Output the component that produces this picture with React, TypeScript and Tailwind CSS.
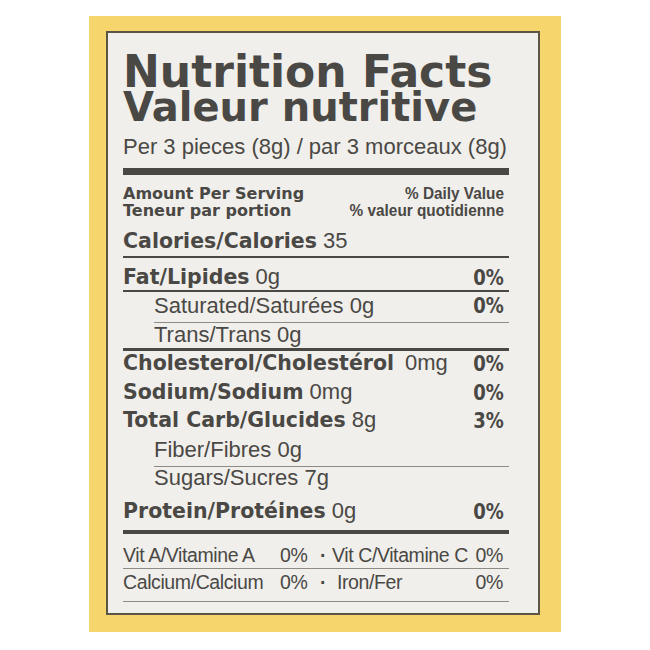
import React from "react";

const BOLD = "font-['DejaVu_Sans',sans-serif] font-bold text-[20.5px]";
const REG = "font-['Liberation_Sans',Arial,sans-serif] font-normal text-[22px]";
const PCT = "inline-block origin-right scale-x-[0.88] font-['DejaVu_Sans',sans-serif] font-bold text-[20.5px]";

function Pct({ v }: { v: string }) {
  return <span className={PCT}>{v}</span>;
}

export default function App() {
  return (
    <div className="w-[650px] h-[650px] bg-white pt-[16px] text-[#4a4844]">
      <div className="mx-auto w-[472px] h-[616px] bg-[#f6d66c] pl-[17px] pt-[15px] pr-[21px] pb-[17px]">
        <div className="h-full border-2 border-[#5c5543] bg-[#f0efec] pl-[15px] pr-[29px] pt-[21px]">
          <div className="font-['DejaVu_Sans',sans-serif] font-bold text-[44px] leading-[36px] h-[36px] whitespace-nowrap">
            Nutrition Facts
          </div>
          <div className="font-['DejaVu_Sans',sans-serif] font-bold text-[40px] leading-[35px] h-[35px] whitespace-nowrap">
            Valeur nutritive
          </div>
          <div className="mt-[10px] font-['Liberation_Sans',Arial,sans-serif] text-[22px] leading-[24px] h-[24px] whitespace-nowrap">
            Per 3 pieces (8g) / par 3 morceaux (8g)
          </div>
          <div className="mt-[9px] h-[7px] bg-[#4a4844]" />
          <div className="mt-[10px] flex justify-between pr-[5px]">
            <div className="font-['DejaVu_Sans',sans-serif] font-bold text-[16px] leading-[17px]">
              <div>Amount Per Serving</div>
              <div>Teneur par portion</div>
            </div>
            <div className="font-['Liberation_Sans',Arial,sans-serif] font-bold text-[16.5px] leading-[17px] text-right origin-right scale-x-[0.93]">
              <div>% Daily Value</div>
              <div>% valeur quotidienne</div>
            </div>
          </div>

          {/* Calories */}
          <div className="h-[39px] pb-[3px] flex items-end border-b-2 border-[#4a4844] leading-[24px] whitespace-nowrap">
            <span className={BOLD}>Calories/Calories</span>
            <span className={REG}>&nbsp;35</span>
          </div>
          {/* Fat */}
          <div className="h-[34px] pb-[0px] pr-[5px] flex items-end justify-between border-b-2 border-[#4a4844] leading-[24px] whitespace-nowrap">
            <span>
              <span className={BOLD}>Fat/Lipides</span>
              <span className={REG}> 0g</span>
            </span>
            <Pct v="0%" />
          </div>
          {/* Saturated */}
          <div className="h-[31px] pl-[31px] flex">
            <div className="flex-1 pb-[4px] pr-[5px] flex items-end justify-between border-b border-[#8e8b85] leading-[24px] whitespace-nowrap">
              <span className={REG}>Saturated/Saturées 0g</span>
              <Pct v="0%" />
            </div>
          </div>
          {/* Trans */}
          <div className="h-[28px] pb-[1px] pl-[31px] flex items-end border-b-[3px] border-[#4a4844] leading-[24px] whitespace-nowrap">
            <span className={REG}>Trans/Trans 0g</span>
          </div>
          {/* Cholesterol */}
          <div className="h-[29px] pb-[4px] pr-[5px] flex items-end justify-between leading-[24px] whitespace-nowrap">
            <span>
              <span className={BOLD}>Cholesterol/Cholestérol</span>
              <span className={`${REG} ml-[11px]`}>0mg</span>
            </span>
            <Pct v="0%" />
          </div>
          {/* Sodium */}
          <div className="h-[29px] pb-[4px] pr-[5px] flex items-end justify-between leading-[24px] whitespace-nowrap">
            <span>
              <span className={BOLD}>Sodium/Sodium</span>
              <span className={REG}> 0mg</span>
            </span>
            <Pct v="0%" />
          </div>
          {/* Total Carb */}
          <div className="h-[28px] pb-[4px] pr-[5px] flex items-end justify-between leading-[24px] whitespace-nowrap">
            <span>
              <span className={BOLD}>Total Carb/Glucides</span>
              <span className={REG}> 8g</span>
            </span>
            <Pct v="3%" />
          </div>
          {/* Fiber */}
          <div className="h-[30px] pl-[31px] flex">
            <div className="flex-1 pb-[4px] flex items-end border-b border-[#8e8b85] leading-[24px] whitespace-nowrap">
              <span className={REG}>Fiber/Fibres 0g</span>
            </div>
          </div>
          {/* Sugars */}
          <div className="h-[27px] pb-[4px] pl-[31px] flex items-end leading-[24px] whitespace-nowrap">
            <span className={REG}>Sugars/Sucres 7g</span>
          </div>
          {/* Protein */}
          <div className="h-[40px] pb-[6px] pr-[5px] flex items-end justify-between border-b-4 border-[#4a4844] leading-[24px] whitespace-nowrap">
            <span>
              <span className={BOLD}>Protein/Protéines</span>
              <span className={REG}> 0g</span>
            </span>
            <Pct v="0%" />
          </div>
          {/* Vitamins */}
          <div className="h-[35px] pb-[2px] pr-[6px] flex items-end border-b border-[#8e8b85] leading-[22px] whitespace-nowrap font-['Liberation_Sans',Arial,sans-serif] text-[19.5px] tracking-[-0.4px]">
            <span className="w-[157px]">Vit A/Vitamine A</span>
            <span className="w-[40px]">0%</span>
            <span className="w-[12px] font-bold">·</span>
            <span className="flex-1">Vit C/Vitamine C</span>
            <span>0%</span>
          </div>
          <div className="h-[33px] pb-[8px] pr-[6px] flex items-end border-b border-[#8e8b85] leading-[22px] whitespace-nowrap font-['Liberation_Sans',Arial,sans-serif] text-[19.5px] tracking-[-0.4px]">
            <span className="w-[157px]">Calcium/Calcium</span>
            <span className="w-[40px]">0%</span>
            <span className="w-[17px] font-bold">·</span>
            <span className="flex-1">Iron/Fer</span>
            <span>0%</span>
          </div>
        </div>
      </div>
    </div>
  );
}
